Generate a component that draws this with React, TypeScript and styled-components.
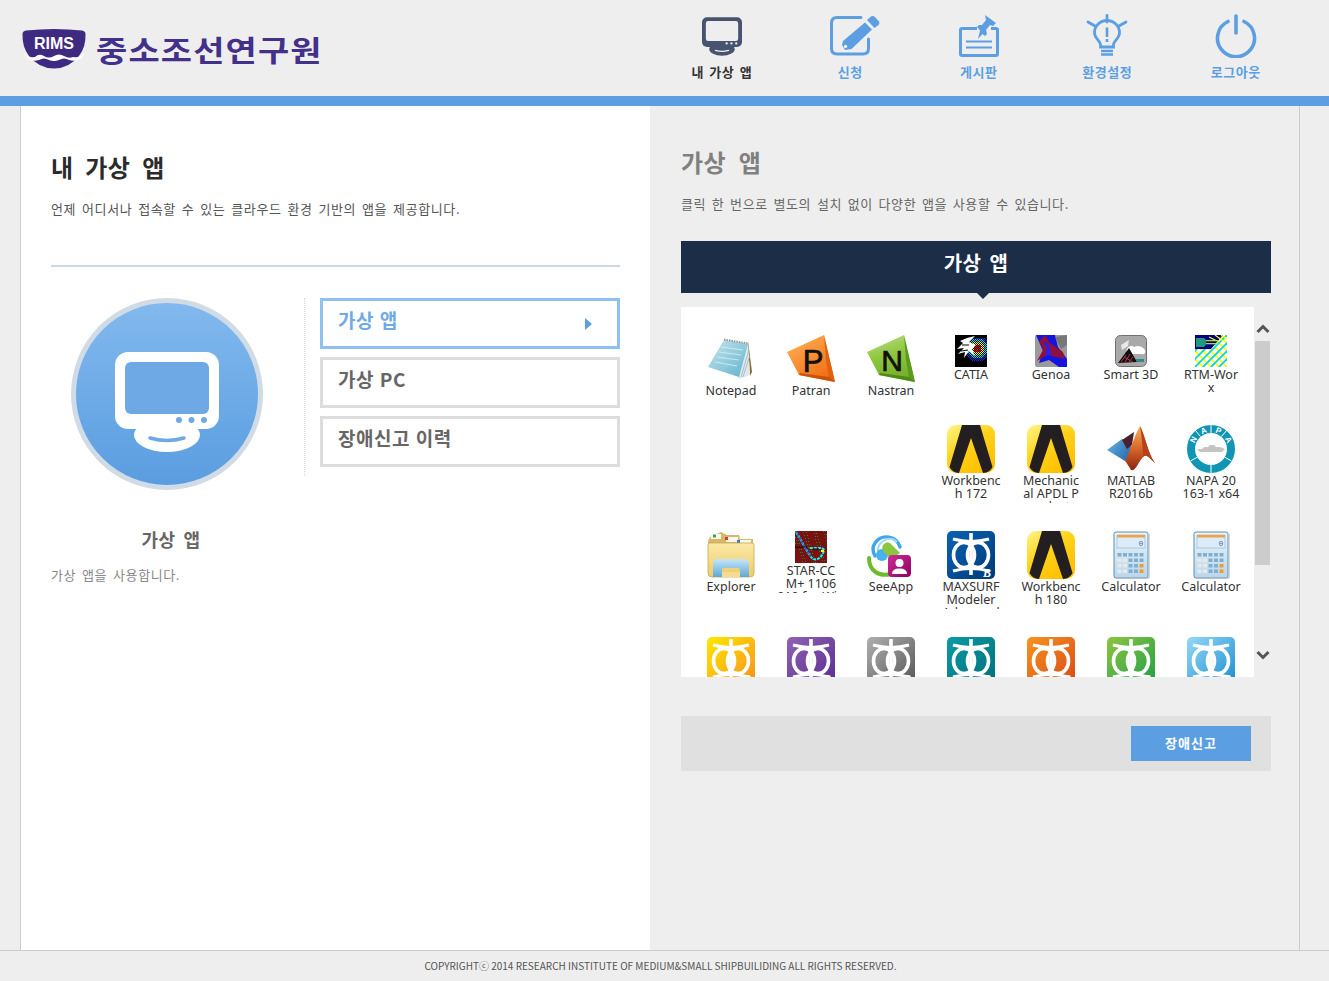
import React from 'react'
import styled, { createGlobalStyle } from 'styled-components'

const BLUE = '#5b9fe2'
const KR = `"Noto Sans CJK KR", "Noto Sans", sans-serif`

const Global = createGlobalStyle`
    html, body {
        margin : 0;
        padding : 0;
        background : #eeeeee;
    }
    body {
        font-family : ${KR};
        overflow : hidden;
    }
`

/* ---------- header icons ---------- */

const MonitorGlyph = ({ body, screen }: { body: string; screen: string }) => (
    <svg viewBox="0 0 104 100" width="100%" height="100%">
        <ellipse cx="52" cy="83" rx="33" ry="17" fill={body} />
        <rect x="0" y="0" width="104" height="77" rx="13" fill={body} />
        <rect x="10" y="10" width="84" height="52" rx="6" fill={screen} />
        <circle cx="64" cy="68" r="3" fill={screen} />
        <circle cx="76.500" cy="68" r="3" fill={screen} />
        <circle cx="89" cy="68" r="3" fill={screen} />
        <path d="M35 86 Q52 91 69 86" stroke={screen} strokeWidth="3.500" fill="none" strokeLinecap="round" />
    </svg>
)

const PencilIcon = () => (
    <NavSvg viewBox="0 0 60 44">
        <path d="M41 3.500H17Q11.500 3.500 11.500 9V34.500Q11.500 40 17 40H43Q48.500 40 48.500 34.500V25" fill="none" stroke={BLUE} strokeWidth="3" strokeLinecap="round" />
        <path d="M23 27L45 8.500L52 15.500L31.500 35L25 36L22 31Z" fill={BLUE} />
        <path d="M47 6L51 2.500Q53 1.500 55 3L59 7.500Q60 9.500 58.500 11L54.500 14Z" fill={BLUE} />
        <circle cx="25.500" cy="32.500" r="1.700" fill="#eeeeee" />
    </NavSvg>
)

const BoardIcon = () => (
    <NavSvg viewBox="0 0 60 44">
        <path d="M28 14.500H13Q11.500 14.500 11.500 16V40Q11.500 41.500 13 41.500H47Q48.500 41.500 48.500 40V16Q48.500 14.500 47 14.500H42" fill="none" stroke={BLUE} strokeWidth="3" />
        <path d="M17 27.500H43M17 33.500H43" stroke={BLUE} strokeWidth="1.800" />
        <path d="M36 1L47 9L44 12L41 11L37 16L38 20L36 22L33.500 20L29 25L31 16.500L28 13L30 11L33 11L37 6Z" fill={BLUE} />
    </NavSvg>
)

const BulbIcon = () => (
    <NavSvg viewBox="0 0 60 44">
        <path d="M30 1.500V8M11 8L18 12M49 8L42 12" stroke={BLUE} strokeWidth="2.800" strokeLinecap="round" />
        <path d="M23.500 33V30.500C23.500 27 17.500 24.500 17.500 18.500A12.500 12 0 0 1 42.500 18.500C42.500 24.500 36.500 27 36.500 30.500V33Z" fill="none" stroke={BLUE} strokeWidth="2.800" />
        <path d="M24 37H36M24 40.500H36" stroke={BLUE} strokeWidth="2.400" />
        <path d="M30 13.500V23M30 25V28" stroke={BLUE} strokeWidth="2.600" />
    </NavSvg>
)

const PowerIcon = () => (
    <NavSvg viewBox="0 0 60 44">
        <path d="M22 7.500A18.500 18.500 0 1 0 38 7.500" fill="none" stroke={BLUE} strokeWidth="3.600" strokeLinecap="round" />
        <path d="M30 2V19" stroke={BLUE} strokeWidth="3.600" strokeLinecap="round" />
    </NavSvg>
)

/* ---------- app icons ---------- */

const NotepadIcon = () => (
    <svg width="48" height="48" viewBox="0 0 48 48">
        <defs>
            <linearGradient id="npad" x1="0" y1="0" x2="1" y2="1">
                <stop offset="0" stopColor="#c8e6ee" />
                <stop offset="1" stopColor="#5fb3cc" />
            </linearGradient>
        </defs>
        <path d="M41 6L45 37L43 41L41 10Z" fill="#8a6a30" />
        <path d="M17 5L41 9L43 40L32 44Z" fill="#dfe8ec" />
        <path d="M17 5L41 9L32 42L1 32Z" fill="url(#npad)" />
        <path d="M14 12L36 15M12 17L34 20M10 22L32 25M8 27L30 31" stroke="#d9f0f5" strokeWidth="0.800" />
        <path d="M34 42L42 15M36 42L43 20" stroke="#9fb4bc" strokeWidth="0.800" />
        <path d="M17 4.500L41 8.500" stroke="#8d9698" strokeWidth="2" strokeDasharray="1.500 1" />
    </svg>
)

const PatranIcon = () => (
    <svg width="48" height="48" viewBox="0 0 48 48">
        <defs>
            <linearGradient id="patr" x1="0" y1="0" x2="0.600" y2="1">
                <stop offset="0" stopColor="#ffb65c" />
                <stop offset="1" stopColor="#f36f15" />
            </linearGradient>
        </defs>
        <path d="M0 17L37 0L48 47L12 40Z" fill="url(#patr)" />
        <path d="M37 0L48 47L42 42L39 25Z" fill="#e0620f" />
        <path d="M12 40L48 47L42 42L13 38Z" fill="#c9530b" />
        <text x="26" y="37" textAnchor="middle" fontFamily="Liberation Sans, sans-serif" fontSize="31" stroke="#111111" strokeWidth="0.700" fill="#111111">P</text>
    </svg>
)

const NastranIcon = () => (
    <svg width="48" height="48" viewBox="0 0 48 48">
        <defs>
            <linearGradient id="nast" x1="0" y1="0" x2="0.300" y2="1">
                <stop offset="0" stopColor="#c2e08c" />
                <stop offset="0.500" stopColor="#8fc73f" />
                <stop offset="1" stopColor="#76b02c" />
            </linearGradient>
        </defs>
        <path d="M0 17L37 0L48 47L12 40Z" fill="url(#nast)" />
        <path d="M37 0L48 47L42 42L39 25Z" fill="#5c9a1c" />
        <path d="M12 40L48 47L42 42L13 38Z" fill="#4f8a14" />
        <text x="25" y="36" textAnchor="middle" fontFamily="Liberation Sans, sans-serif" fontSize="30" stroke="#111111" strokeWidth="0.700" fill="#111111">N</text>
    </svg>
)

const catiaDots = Array.from({ length: 32 * 32 }, (_, i) => {
    const x = i % 32
    const y = Math.floor(i / 32)
    const r = Math.hypot(x - 22, y - 13)
    if (r > 13 || (x + y) % 2 === 1 || y < 3) return null
    const c = r < 4 ? '#ff0000' : r < 7 ? '#ffff00' : r < 10 ? '#00e0ff' : '#1030e0'
    return { x, y, c }
}).filter(Boolean) as { x: number; y: number; c: string }[]

const CatiaIcon = () => (
    <svg width="32" height="32" viewBox="0 0 32 32" shapeRendering="crispEdges">
        <rect width="32" height="32" fill="#000000" />
        {catiaDots.map((d, i) => <rect key={i} x={d.x} y={d.y} width="1" height="1" fill={d.c} />)}
        <path d="M2 14L8 8L5 6L12 3L20 1L14 7L21 10L17 14L20 21L14 16L9 23L10 17L3 19L9 13Z" fill="#ffffff" shapeRendering="auto" />
        <path d="M7 10L14 10M6 16L13 15" stroke="#000000" strokeWidth="1" shapeRendering="auto" />
    </svg>
)

const GenoaIcon = () => (
    <svg width="32" height="32" viewBox="0 0 32 32">
        <rect width="32" height="32" rx="2" fill="#9a9a9a" />
        <path d="M1 0H20L23 12L32 24V32H24L14 25L4 28L8 16Z" fill="#1414e0" />
        <path d="M10 0L15 8L28 17L30 24L21 22L12 20L2 26L8 15L4 6Z" fill="#8c1040" />
        <path d="M8 6L14 10L16 20L11 21L12 13Z" fill="#1a22ff" />
        <path d="M20 2L32 0V10L26 14Z" fill="#777777" />
    </svg>
)

const Smart3DIcon = () => (
    <svg width="32" height="32" viewBox="0 0 32 32">
        <rect x="0.500" y="0.500" width="31" height="31" rx="5" fill="#a9a9a9" stroke="#707070" />
        <path d="M12 14C13 11 17 10 19 12C23 10 27 11 30 15C31 18 29 20 26 19H15C12 19 11 16 12 14Z" fill="#ffffff" />
        <path d="M6 10L14 5L13 11L7 15Z" fill="#e8e8e8" />
        <path d="M3 28L14 13L22 27Z" fill="#111111" />
        <path d="M6 27L11 20M10 27L15 19M14 27L18 22M9 22L18 27" stroke="#c03048" strokeWidth="1" />
        <path d="M22 27H29V24H21Z" fill="#2a8c90" />
    </svg>
)

const LATTICE = [-32, -24, -16, -8, 0, 8, 16, 24, 32]

const RtmIcon = () => (
    <svg width="32" height="32" viewBox="0 0 32 32">
        <defs>
            <clipPath id="rtmclip">
                <path d="M0 14L16 14L28 0H32V32H0Z" />
            </clipPath>
        </defs>
        <rect width="32" height="32" fill="#000080" />
        <path d="M0 14L16 14L28 0H32V32H0Z" fill="#ffffff" />
        <g clipPath="url(#rtmclip)" fill="none">
            {LATTICE.map(k => <path key={`a${k}`} d={`M${k} 0L${k + 32} 32`} stroke="#000000" strokeWidth="1" transform="translate(1 1)" />)}
            {LATTICE.map(k => <path key={`b${k}`} d={`M${k} 0L${k + 32} 32`} stroke="#ffff00" strokeWidth="1.800" />)}
            {LATTICE.map(k => <path key={`c${k}`} d={`M${k} 32L${k + 32} 0`} stroke="#00d8e0" strokeWidth="1.800" />)}
        </g>
        <path d="M14 2L22 6M20 0L28 6M26 0L32 4" stroke="#ffff00" strokeWidth="1.200" />
        <path d="M1 3H9L11 5H21V6.500H11V8H21V9.500H11L9 12H1Z" fill="#1f9a80" />
        <path d="M11 5.500H24M11 8.500H22" stroke="#e8e020" strokeWidth="0.800" />
    </svg>
)

const AnsysIcon = () => (
    <svg width="48" height="48" viewBox="0 0 48 48">
        <defs>
            <linearGradient id="ans" x1="0" y1="0" x2="0.700" y2="1">
                <stop offset="0" stopColor="#fff587" />
                <stop offset="0.500" stopColor="#ffd21a" />
                <stop offset="1" stopColor="#ffbf00" />
            </linearGradient>
        </defs>
        <rect width="48" height="48" rx="9" fill="url(#ans)" />
        <path d="M15 0H33L45.500 42Q43 47.500 36 48L24 13L12 48Q5 47.500 2.500 42Z" fill="#231f20" />
    </svg>
)

const MatlabIcon = () => (
    <svg width="48" height="48" viewBox="0 0 48 48">
        <defs>
            <linearGradient id="mat" x1="0" y1="0" x2="0" y2="1">
                <stop offset="0" stopColor="#f3b45a" />
                <stop offset="0.500" stopColor="#d9682a" />
                <stop offset="1" stopColor="#8a2412" />
            </linearGradient>
            <linearGradient id="matb" x1="0" y1="0" x2="1" y2="0.500">
                <stop offset="0" stopColor="#68b4e6" />
                <stop offset="1" stopColor="#2a6cb0" />
            </linearGradient>
        </defs>
        <path d="M0 25L15 14L27 24L18 36Z" fill="url(#matb)" />
        <path d="M15 15L27 7L25 20L20 24Z" fill="#4a2030" />
        <path d="M18 36C23 26 28 9 33 1C38 10 41 29 48 38C44 35 40 28 36 32C31 38 28 47 24 45C22 42 20 38 18 36Z" fill="url(#mat)" />
        <path d="M36 32C40 28 44 35 48 38C41 29 38 10 33 1C35 14 36 24 36 32Z" fill="#b5401c" />
    </svg>
)

const NapaIcon = () => (
    <svg width="48" height="48" viewBox="0 0 48 48">
        <circle cx="24" cy="24" r="20" fill="none" stroke="#1096b4" strokeWidth="8" />
        <path d="M24 40V48M10.500 32L3.500 36M37.500 32L44.500 36M24 0V8M13.500 11.500L8 5M34.500 11.500L40 5" stroke="#ffffff" strokeWidth="1" />
        <path d="M10 24H15L17 22H21L23 20H27L29 22H33L38 24L35 27H13Z" fill="#c4c4c4" />
        <g fontFamily="Liberation Sans, sans-serif" fontSize="8" fontWeight="700" fill="#ffffff" textAnchor="middle">
            <text transform="translate(6.300 14.600) rotate(-62) translate(0 3)">N</text>
            <text transform="translate(16.500 5.500) rotate(-22) translate(0 3)">A</text>
            <text transform="translate(31.500 5.500) rotate(22) translate(0 3)">P</text>
            <text transform="translate(41.700 14.600) rotate(62) translate(0 3)">A</text>
        </g>
    </svg>
)

const ExplorerIcon = () => (
    <svg width="48" height="48" viewBox="0 0 48 48">
        <defs>
            <linearGradient id="fold" x1="0" y1="0" x2="0" y2="1">
                <stop offset="0" stopColor="#fbe9a6" />
                <stop offset="1" stopColor="#eecb6c" />
            </linearGradient>
            <linearGradient id="foldb" x1="0" y1="0" x2="0" y2="1">
                <stop offset="0" stopColor="#c6e6f8" />
                <stop offset="1" stopColor="#5ea8d4" />
            </linearGradient>
        </defs>
        <path d="M3 6L14 1L20 4H32L33 8H46V44H1V10Z" fill="#d6b868" />
        <rect x="4" y="3" width="10" height="5" fill="#f6f6f2" />
        <rect x="19" y="6" width="12" height="5" fill="#f6f6f2" />
        <rect x="31" y="9" width="13" height="5" fill="#f6f6f2" />
        <rect x="6" y="3.500" width="3" height="3" fill="#3fa64a" />
        <rect x="18" y="6" width="3" height="3" fill="#d04030" />
        <rect x="30" y="9" width="3" height="3" fill="#2f7fcf" />
        <path d="M1 14Q1 12 3 12H45Q47 12 47 14L47 42Q47 46 43 46H5Q1 46 1 42Z" fill="url(#fold)" stroke="#c8a850" strokeWidth="0.800" />
        <path d="M6 46V33Q6 28 11 28H37Q42 28 42 33V46H33V39Q33 37 31 37H17Q15 37 15 39V46Z" fill="url(#foldb)" />
        <path d="M15 46H33V41H15Z" fill="#f3dc90" />
    </svg>
)

const starDots = Array.from({ length: 70 }, (_, i) => ({ x: (i * 13) % 32, y: (i * 7 + (i % 5) * 3) % 32 }))

const StarIcon = () => (
    <svg width="32" height="32" viewBox="0 0 32 32">
        <rect width="32" height="32" fill="#7a1010" />
        {starDots.map((d, i) => <rect key={i} x={d.x} y={d.y} width="1" height="1" fill="#109030" />)}
        <path d="M1 1C6 8 10 18 16 26C20 31 26 28 29 20C30 16 22 17 14 17" fill="none" stroke="#00ffff" strokeWidth="2" strokeDasharray="3 1" />
        <path d="M1 1C6 8 10 18 16 26" fill="none" stroke="#4040ff" strokeWidth="1" />
        <path d="M0 16H12M18 18H24" stroke="#000000" strokeWidth="1" />
        <path d="M26 20L29 20" stroke="#ffff00" strokeWidth="2" />
    </svg>
)

const SeeAppIcon = () => (
    <svg width="48" height="48" viewBox="0 0 48 48">
        <defs>
            <linearGradient id="seep" x1="0" y1="0" x2="1" y2="1">
                <stop offset="0" stopColor="#cf2e96" />
                <stop offset="1" stopColor="#8c0060" />
            </linearGradient>
        </defs>
        <path d="M33 16A14 14 0 0 0 8 12Q4 18 8 25" fill="none" stroke="#3ea6e8" strokeWidth="3.400" strokeLinecap="round" />
        <path d="M11 21Q10 12 20 8Q26 7 30 11" fill="none" stroke="#a6d8f4" strokeWidth="2" />
        <circle cx="15" cy="24" r="6" fill="#4ab0ee" />
        <path d="M17 13Q21 9 25 14L33 22L24 28L16 20Q14 16 17 13Z" fill="#8cc63f" />
        <path d="M2 27C2 40 12 46 24 43" fill="none" stroke="#6cbb2c" strokeWidth="4" strokeLinecap="round" />
        <rect x="21" y="24" width="23" height="22" rx="4" fill="url(#seep)" />
        <circle cx="32.500" cy="32" r="4" fill="#ffffff" />
        <path d="M25 43Q25 37.500 32.500 37.500Q40 37.500 40 43Z" fill="#ffffff" />
    </svg>
)

const MaxsurfIcon = ({ id, from, to }: { id: string; from: string; to: string }) => (
    <svg width="48" height="48" viewBox="0 0 48 48">
        <defs>
            <linearGradient id={id} x1="0" y1="0" x2="1" y2="1">
                <stop offset="0" stopColor={from} />
                <stop offset="1" stopColor={to} />
            </linearGradient>
        </defs>
        <rect width="48" height="48" rx="5" fill={`url(#${id})`} />
        <ellipse cx="17" cy="24" rx="10.500" ry="12.500" fill="none" stroke="#ffffff" strokeWidth="3.600" />
        <ellipse cx="31" cy="24" rx="10.500" ry="12.500" fill="none" stroke="#ffffff" strokeWidth="3.600" />
        <path d="M24 2V44" stroke="#ffffff" strokeWidth="3.600" />
        <path d="M6 8Q24 13 42 8M6 40Q24 35 42 40" fill="none" stroke="#ffffff" strokeWidth="3" />
        <text x="40" y="46" textAnchor="middle" fontFamily="Liberation Serif, serif" fontStyle="italic" fontWeight="700" fontSize="12" fill="#ffffff">B</text>
    </svg>
)

const CalculatorIcon = ({ id }: { id: string }) => (
    <svg width="48" height="48" viewBox="0 0 48 48">
        <defs>
            <linearGradient id={id} x1="0" y1="0" x2="0" y2="1">
                <stop offset="0" stopColor="#eaf4fb" />
                <stop offset="1" stopColor="#b9d6ea" />
            </linearGradient>
        </defs>
        <rect x="7" y="1" width="34" height="46" rx="2" fill={`url(#${id})`} stroke="#5d8fb8" strokeWidth="1" />
        <rect x="10" y="4" width="28" height="13" fill="#dcebf8" stroke="#7da6c6" strokeWidth="0.500" />
        <rect x="10" y="4" width="28" height="2.500" fill="#f2a43c" />
        <text x="34" y="15" textAnchor="middle" fontFamily="Liberation Mono, monospace" fontSize="8" fill="#3f6f9f">0</text>
        {[0, 1, 2, 3, 4].map(c => [0, 1, 2, 3].map(r => (
            <rect key={`${c}${r}`} x={10.500 + c * 5.500} y={24 + r * 5.500 - 2} width="4" height="3.500" fill={r > 0 && c < 2 ? '#e8e8e8' : c === 4 && r > 1 ? '#f29a2e' : '#7faecf'} />
        )))}
        <path d="M42 3V47H9" fill="none" stroke="#b0b8c0" strokeWidth="1" />
    </svg>
)

/* ---------- data ---------- */

const NAV = [
    { label: '내 가상 앱', icon: null, active: true },
    { label: '신청', icon: <PencilIcon /> },
    { label: '게시판', icon: <BoardIcon /> },
    { label: '환경설정', icon: <BulbIcon /> },
    { label: '로그아웃', icon: <PowerIcon /> },
]

const MENU = ['가상 앱', '가상 PC', '장애신고 이력']

interface AppItem {
    label?: string
    icon: React.ReactNode
    col?: number
}

const APPS: AppItem[] = [
    { label: 'Notepad', icon: <NotepadIcon /> },
    { label: 'Patran', icon: <PatranIcon /> },
    { label: 'Nastran', icon: <NastranIcon /> },
    { label: 'CATIA', icon: <CatiaIcon /> },
    { label: 'Genoa', icon: <GenoaIcon /> },
    { label: 'Smart 3D', icon: <Smart3DIcon /> },
    { label: 'RTM-Wor\nx', icon: <RtmIcon /> },
    { label: 'Workbenc\nh 172', icon: <AnsysIcon />, col: 4 },
    { label: 'Mechanic\nal APDL P\nroduct', icon: <AnsysIcon /> },
    { label: 'MATLAB\nR2016b', icon: <MatlabIcon /> },
    { label: 'NAPA 20\n163-1 x64', icon: <NapaIcon /> },
    { label: 'Explorer', icon: <ExplorerIcon /> },
    { label: 'STAR-CC\nM+ 1106\n010 for Win', icon: <StarIcon /> },
    { label: 'SeeApp', icon: <SeeAppIcon /> },
    { label: 'MAXSURF\nModeler\nAdvanced', icon: <MaxsurfIcon id="ms0" from="#0a62b4" to="#003a78" /> },
    { label: 'Workbenc\nh 180', icon: <AnsysIcon /> },
    { label: 'Calculator', icon: <CalculatorIcon id="calc1" /> },
    { label: 'Calculator', icon: <CalculatorIcon id="calc2" /> },
    { icon: <MaxsurfIcon id="ms1" from="#ffe800" to="#f7901e" /> },
    { icon: <MaxsurfIcon id="ms2" from="#8f62b4" to="#5c2d91" /> },
    { icon: <MaxsurfIcon id="ms3" from="#b0b0b0" to="#555555" /> },
    { icon: <MaxsurfIcon id="ms4" from="#0a9aa6" to="#00707a" /> },
    { icon: <MaxsurfIcon id="ms5" from="#f7941e" to="#d9481a" /> },
    { icon: <MaxsurfIcon id="ms6" from="#8dc63f" to="#1f9e48" /> },
    { icon: <MaxsurfIcon id="ms7" from="#95d8f8" to="#1a8ed0" /> },
]

/* ---------- page ---------- */

const App = () => (
    <Page>
        <Global />
        <Header>
            <Logo>
                <svg width="66" height="42" viewBox="0 0 66 42">
                    <path d="M1.500 7Q1.500 4 5 3.500Q33 0.500 61 3.500Q64.500 4 64.500 7Q65 20 58 29Q48 41.500 33 41.500Q18 41.500 8 29Q1 20 1.500 7Z" fill="#3f2a82" />
                    <path d="M2 26Q7 31 14 30Q18 26 23 29Q28 32 33 29Q38 26 43 29Q48 32 52 30Q59 31 64 26L60 32Q54 35 48 33Q43 30 38 33Q33 35 28 33Q23 30 18 33Q12 35 7 32Z" fill="#ffffff" />
                    <text x="33" y="22" textAnchor="middle" fontFamily="Liberation Sans, sans-serif" fontWeight="700" fontSize="16" fill="#ffffff">RIMS</text>
                </svg>
                <LogoText>중소조선연구원</LogoText>
            </Logo>
            <Nav>
                {NAV.map(item => (
                    <NavItem key={item.label} $active={item.active}>
                        <NavIcon>
                            {item.icon ?? <MonitorBox><MonitorGlyph body="#465470" screen="#eeeeee" /></MonitorBox>}
                        </NavIcon>
                        {item.label}
                    </NavItem>
                ))}
            </Nav>
        </Header>
        <BlueBar />
        <Body>
            <LeftPanel>
                <PageTitle>내 가상 앱</PageTitle>
                <PageDesc>언제 어디서나 접속할 수 있는 클라우드 환경 기반의 앱을 제공합니다.</PageDesc>
                <Divider />
                <Columns>
                    <Summary>
                        <Circle>
                            <CircleGlyph><MonitorGlyph body="#ffffff" screen="#6ea9e6" /></CircleGlyph>
                        </Circle>
                        <SummaryTitle>가상 앱</SummaryTitle>
                        <SummaryDesc>가상 앱을 사용합니다.</SummaryDesc>
                    </Summary>
                    <Menu>
                        {MENU.map((m, i) => (
                            <MenuButton key={m} $active={i === 0}>
                                {m}
                                {i === 0 && <Arrow />}
                            </MenuButton>
                        ))}
                    </Menu>
                </Columns>
            </LeftPanel>
            <RightPanel>
                <RightTitle>가상 앱</RightTitle>
                <RightDesc>클릭 한 번으로 별도의 설치 없이 다양한 앱을 사용할 수 있습니다.</RightDesc>
                <DarkBar>가상 앱</DarkBar>
                <ListArea>
                    <AppGrid>
                        {APPS.map((a, i) => (
                            <AppCell key={i} $col={a.col}>
                                {a.icon}
                                {a.label && <AppLabel>{a.label}</AppLabel>}
                            </AppCell>
                        ))}
                    </AppGrid>
                    <ScrollBar>
                        <svg width="16" height="34" viewBox="0 0 16 34">
                            <path d="M2.500 25L8 19.500L13.500 25" fill="none" stroke="#555555" strokeWidth="3" />
                        </svg>
                        <Thumb />
                        <svg width="16" height="112" viewBox="0 0 16 112">
                            <path d="M2.500 87L8 92.500L13.500 87" fill="none" stroke="#555555" strokeWidth="3" />
                        </svg>
                    </ScrollBar>
                </ListArea>
                <ActionBar>
                    <ReportButton>장애신고</ReportButton>
                </ActionBar>
            </RightPanel>
        </Body>
        <Footer>COPYRIGHTⓒ 2014 RESEARCH INSTITUTE OF MEDIUM&amp;SMALL SHIPBUILIDING ALL RIGHTS RESERVED.</Footer>
    </Page>
)

export default App

// styled-component
const Page = styled.div`
    display : flex;
    flex-direction : column;
    width : 1329px;
    height : 981px;
    background : #eeeeee;
`
const Header = styled.header`
    display : flex;
    justify-content : space-between;
    height : 96px;
    padding : 0 29px 0 21px;
    box-sizing : border-box;
`
const Logo = styled.div`
    display : flex;
    align-items : center;
    gap : 9px;
`
const LogoText = styled.div`
    padding-top : 2px;
    font-size : 29px;
    font-weight : 700;
    color : #43308a;
    letter-spacing : 1px;
    line-height : 1;
    white-space : nowrap;
    transform : scaleX(1.17);
    transform-origin : left center;
`
const Nav = styled.nav`
    display : flex;
`
const NavItem = styled.div<{ $active?: boolean }>`
    width : 128.5px;
    display : flex;
    flex-direction : column;
    align-items : center;
    padding-top : 14px;
    font-size : 13px;
    font-weight : 700;
    line-height : 18px;
    letter-spacing : 0.5px;
    word-spacing : 2px;
    color : ${p => (p.$active ? '#333333' : BLUE)};
`
const NavIcon = styled.div`
    height : 44px;
    margin-bottom : 5px;
    display : flex;
    justify-content : center;
    align-items : center;
`
const NavSvg = styled.svg`
    width : 60px;
    height : 44px;
`
const MonitorBox = styled.div`
    width : 40px;
    height : 39px;
`
const BlueBar = styled.div`
    height : 10px;
    background : ${BLUE};
`
const Body = styled.main`
    flex : 1;
    display : flex;
    padding : 0 29px 0 20px;
    min-height : 0;
`
const LeftPanel = styled.section`
    width : 630px;
    box-sizing : border-box;
    padding : 43px 30px 0 30px;
    background : #ffffff;
    border-left : 1px solid #cccccc;
`
const PageTitle = styled.h1`
    margin : 0;
    font-size : 24px;
    font-weight : 700;
    line-height : 36px;
    letter-spacing : 0.4px;
    word-spacing : 6px;
    color : #2b2b2b;
`
const PageDesc = styled.p`
    margin : 14px 0 0;
    font-size : 13px;
    line-height : 20px;
    letter-spacing : 0.6px;
    word-spacing : 2.4px;
    color : #555555;
`
const Divider = styled.hr`
    margin : 46px 0 31px;
    border : 0;
    height : 2px;
    background : #cbd8e2;
`
const Columns = styled.div`
    display : flex;
    justify-content : space-between;
`
const Summary = styled.div`
    width : 240px;
`
const Circle = styled.div`
    width : 192px;
    height : 192px;
    margin-left : 20px;
    box-sizing : border-box;
    border : 5px solid #d0dbe5;
    border-radius : 50%;
    background : linear-gradient(#82b9ee, #5a9de0);
    display : flex;
    justify-content : center;
    align-items : center;
`
const CircleGlyph = styled.div`
    width : 104px;
    height : 100px;
    margin-top : 15px;
`
const SummaryTitle = styled.h2`
    margin : 36px 0 0 0;
    width : 240px;
    text-align : center;
    font-size : 18px;
    font-weight : 700;
    line-height : 26px;
    letter-spacing : 0.3px;
    word-spacing : 4px;
    color : #666666;
`
const SummaryDesc = styled.p`
    margin : 13px 0 0;
    font-size : 13px;
    line-height : 20px;
    letter-spacing : 0.6px;
    word-spacing : 2.4px;
    color : #888888;
`
const Menu = styled.div`
    width : 316px;
    height : 178px;
    box-sizing : border-box;
    padding-left : 15px;
    border-left : 1px dotted #d5d5d5;
    display : flex;
    flex-direction : column;
    gap : 8px;
`
const MenuButton = styled.div<{ $active?: boolean }>`
    height : 51px;
    box-sizing : border-box;
    border : 3px solid ${p => (p.$active ? '#8ec1f1' : '#dddddd')};
    padding : 0 25px 8px 15px;
    display : flex;
    justify-content : space-between;
    align-items : center;
    font-size : 19px;
    font-weight : 700;
    letter-spacing : 0.5px;
    word-spacing : 1px;
    color : ${p => (p.$active ? '#6fa9e6' : '#666666')};
`
const Arrow = styled.span`
    width : 0;
    height : 0;
    margin-top : 8px;
    border-left : 7px solid ${BLUE};
    border-top : 6px solid transparent;
    border-bottom : 6px solid transparent;
`
const RightPanel = styled.section`
    width : 650px;
    box-sizing : border-box;
    padding : 38px 28px 0 31px;
    border-right : 1px solid #cccccc;
`
const RightTitle = styled.h2`
    margin : 0;
    font-size : 24px;
    font-weight : 700;
    line-height : 36px;
    letter-spacing : 0.4px;
    word-spacing : 7px;
    color : #808080;
`
const RightDesc = styled.p`
    margin : 14px 0 0;
    font-size : 13px;
    line-height : 20px;
    letter-spacing : 0.6px;
    word-spacing : 2.2px;
    color : #666666;
`
const DarkBar = styled.div`
    position : relative;
    margin-top : 27px;
    height : 52px;
    padding-bottom : 10px;
    box-sizing : border-box;
    background : #1b2d47;
    color : #ffffff;
    font-size : 20px;
    font-weight : 700;
    letter-spacing : 0.5px;
    word-spacing : 3px;
    display : flex;
    justify-content : center;
    align-items : center;
    &::after {
        content : '';
        position : absolute;
        left : 296px;
        top : 52px;
        border-top : 6px solid #1b2d47;
        border-left : 6px solid transparent;
        border-right : 6px solid transparent;
    }
`
const ListArea = styled.div`
    margin-top : 14px;
    height : 370px;
    display : flex;
`
const AppGrid = styled.div`
    width : 573px;
    box-sizing : border-box;
    padding : 28px 0 0 10px;
    background : #ffffff;
    overflow : hidden;
    display : grid;
    grid-template-columns : repeat(7, 80px);
    grid-template-rows : 90px 106px 106px 106px;
`
const AppCell = styled.div<{ $col?: number }>`
    grid-column-start : ${p => p.$col ?? 'auto'};
    display : flex;
    flex-direction : column;
    align-items : center;
    svg {
        display : block;
        flex : none;
    }
`
const AppLabel = styled.div`
    width : 72px;
    height : 29px;
    margin-top : 1px;
    overflow : hidden;
    text-align : center;
    white-space : pre-line;
    font-family : "Noto Sans", sans-serif;
    font-size : 12.5px;
    line-height : 13px;
    color : #333333;
`
const ScrollBar = styled.div`
    width : 17px;
    display : flex;
    flex-direction : column;
    align-items : center;
    svg {
        display : block;
        flex : none;
    }
`
const Thumb = styled.div`
    width : 15px;
    height : 224px;
    background : #cccccc;
`
const ActionBar = styled.div`
    margin-top : 39px;
    height : 55px;
    padding-right : 20px;
    background : #e0e0e0;
    display : flex;
    justify-content : flex-end;
    align-items : center;
`
const ReportButton = styled.div`
    width : 120px;
    height : 35px;
    padding-bottom : 3px;
    box-sizing : border-box;
    background : ${BLUE};
    color : #ffffff;
    font-size : 13px;
    font-weight : 700;
    letter-spacing : 1px;
    display : flex;
    justify-content : center;
    align-items : center;
`
const Footer = styled.footer`
    height : 31px;
    box-sizing : border-box;
    padding : 0 8px 2px 0;
    border-top : 1px solid #cccccc;
    background : #eeeeee;
    display : flex;
    justify-content : center;
    align-items : center;
    font-size : 10px;
    color : #555555;
`
